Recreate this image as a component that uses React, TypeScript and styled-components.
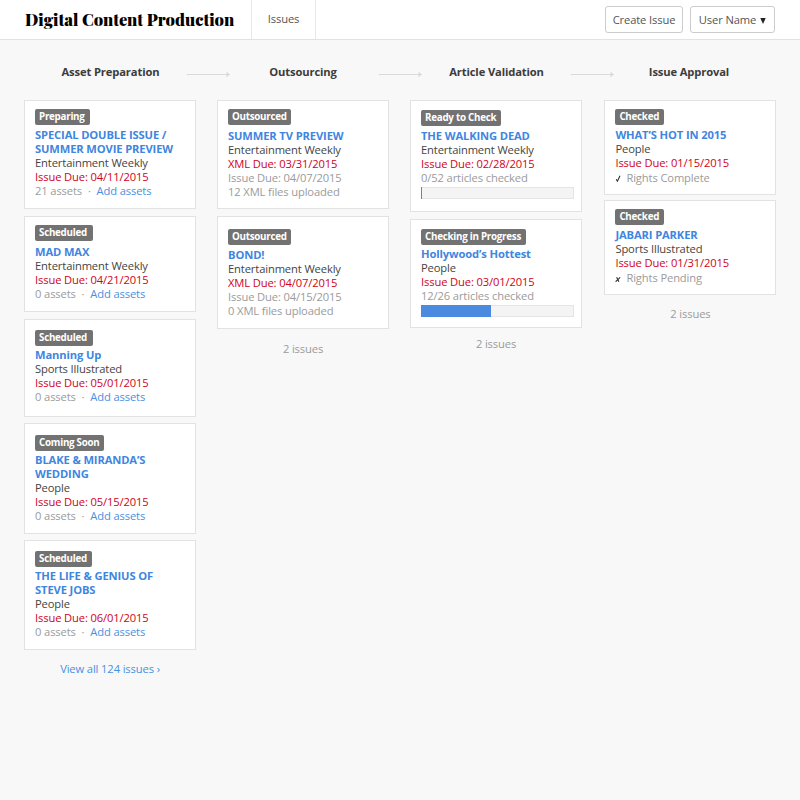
import React from 'react';
import styled, { createGlobalStyle } from 'styled-components';

const GlobalStyle = createGlobalStyle`
  * { box-sizing: border-box; }
  body {
    margin: 0;
    background: #f8f8f8;
    color: #444;
    font-family: "Open Sans", "Noto Sans", sans-serif;
    font-size: 11.2px;
    letter-spacing: -0.13px;
    line-height: 14px;
  }
`;

const Page = styled.div`
  width: 800px;
  height: 800px;
  overflow: hidden;
  background: #f8f8f8;
`;

const TopBar = styled.header`
  display: flex;
  height: 40px;
  background: #fff;
  border-bottom: 1px solid #e2e2e2;
`;

const Brand = styled.h1`
  width: 251px;
  margin: 0;
  padding: 8px 0 0 25px;
  font: 900 16.4px/22px "Playfair Display", "Abril Fatface", "Liberation Serif", serif;
  letter-spacing: 0;
  color: #000;
  white-space: nowrap;
`;

const NavLink = styled.a`
  width: 65px;
  padding-top: 12px;
  border: solid #e8e8e8;
  border-width: 0 1px;
  text-align: center;
  color: #555;
`;

const Actions = styled.div`
  display: flex;
  gap: 7px;
  margin: 6px 25px 0 auto;
`;

const Button = styled.button<{ $width: number }>`
  display: flex;
  align-items: center;
  justify-content: center;
  gap: 4px;
  width: ${p => p.$width}px;
  height: 27px;
  padding: 0;
  border: 1px solid #ccc;
  border-radius: 3px;
  background: #fff;
  font: inherit;
  letter-spacing: inherit;
  color: #555;
  white-space: nowrap;
`;

const Caret = styled.svg`
  width: 6px;
  height: 6px;
  margin-top: 2px;
  fill: #222;
`;

const Steps = styled.div`
  display: flex;
  align-items: center;
  height: 14px;
  margin: 25px 0 0 34px;
`;

const StepTitle = styled.h2<{ $width: number; $trim?: number }>`
  width: ${p => p.$width}px;
  margin: 0;
  padding-right: ${p => p.$trim ?? 0}px;
  text-align: center;
  font-size: inherit;
  line-height: 14px;
  font-weight: 700;
  color: #3c3c3c;
  white-space: nowrap;
`;

const StepArrow = styled.svg`
  width: 43px;
  height: 7px;
  margin-top: 4px;
  fill: #dadada;
`;

const Board = styled.main`
  display: grid;
  grid-template-columns: 172px 172px 172px 172px;
  column-gap: 21px;
  align-items: start;
  padding: 21px 0 0 24px;

  & > :last-child { margin-left: 1.4px; margin-right: -1.4px; }
`;

const Column = styled.section`
  display: flex;
  flex-direction: column;
`;

const CardBox = styled.article<{ $height: number; $gap: number; $pad: number }>`
  height: ${p => p.$height}px;
  margin-top: ${p => p.$gap}px;
  padding: ${p => p.$pad}px 7px 0 10px;
  border: 1px solid #e2e2e2;
  background: #fff;
  white-space: nowrap;
`;

const Badge = styled.div<{ $width: number }>`
  width: ${p => p.$width}px;
  height: 16px;
  padding-left: 4px;
  border-radius: 2px;
  background: #727272;
  color: #fff;
  font-size: 9.8px;
  letter-spacing: -0.26px;
  line-height: 15px;
  font-weight: 700;
`;

const Title = styled.h3<{ $gap: number }>`
  margin: ${p => p.$gap}px 0 0;
  font-size: inherit;
  line-height: 14px;
  font-weight: 700;
  color: #3f86e0;
  white-space: pre-line;
`;

const Line = styled.div<{ $tone?: 'due' | 'muted' }>`
  color: ${p => (p.$tone === 'due' ? '#d0021b' : p.$tone === 'muted' ? '#9b9b9b' : '#444')};
`;

const AddLink = styled.a`
  color: #4a90e2;
`;

const Dot = styled.span`
  display: inline-block;
  width: 14.5px;
  text-align: center;
`;

const Rights = styled(Line)`
  display: flex;
  align-items: center;
  height: 16px;
  gap: 4px;
`;

const Mark = styled.svg`
  width: 7px;
  height: 7px;
  margin-top: 1px;
  fill: none;
  stroke: #333;
`;

const Track = styled.div<{ $gap: number }>`
  width: 153px;
  height: 12px;
  margin-top: ${p => p.$gap}px;
  border: 1px solid #e4e4e4;
  background: #f4f4f4;
`;

const Fill = styled.div`
  height: 12px;
  margin: -1px 0 0 -1px;
  background: #4a8be0;
`;

const Footer = styled.div<{ $gap: number; $link?: boolean }>`
  margin-top: ${p => p.$gap}px;
  text-align: center;
  color: ${p => (p.$link ? '#4a90e2' : '#9b9b9b')};
`;

interface Issue {
  badge: string;
  badgeWidth: number;
  title: string;
  brand: string;
  due: string;
  height: number;
  gap?: number;
  pad: number;
  titleGap: number;
  xml?: { due: string; files: number };
  assets?: number;
  rights?: 'Complete' | 'Pending';
  progress?: { label: string; fill: number; gap: number };
}

interface Stage {
  issues: Issue[];
  footer: string;
  footerGap: number;
  link?: boolean;
}

const EW = 'Entertainment Weekly';

const stages: Stage[] = [
  {
    footer: 'View all 124 issues ›', footerGap: 12, link: true,
    issues: [
      { badge: 'Preparing', badgeWidth: 55, title: 'SPECIAL DOUBLE ISSUE /\nSUMMER MOVIE PREVIEW', brand: EW, due: '04/11/2015', assets: 21, height: 109, pad: 8, titleGap: 3 },
      { badge: 'Scheduled', badgeWidth: 58, title: 'MAD MAX', brand: EW, due: '04/21/2015', assets: 0, height: 96, gap: 7, pad: 8, titleGap: 4 },
      { badge: 'Scheduled', badgeWidth: 58, title: 'Manning Up', brand: 'Sports Illustrated', due: '05/01/2015', assets: 0, height: 98, gap: 7, pad: 10, titleGap: 2 },
      { badge: 'Coming Soon', badgeWidth: 69, title: 'BLAKE & MIRANDA’S\nWEDDING', brand: 'People', due: '05/15/2015', assets: 0, height: 111, gap: 6, pad: 11, titleGap: 2 },
      { badge: 'Scheduled', badgeWidth: 57, title: 'THE LIFE & GENIUS OF\nSTEVE JOBS', brand: 'People', due: '06/01/2015', assets: 0, height: 110, gap: 6, pad: 10, titleGap: 2 },
    ],
  },
  {
    footer: '2 issues', footerGap: 13,
    issues: [
      { badge: 'Outsourced', badgeWidth: 63, title: 'SUMMER TV PREVIEW', brand: EW, due: '04/07/2015', xml: { due: '03/31/2015', files: 12 }, height: 109, pad: 8, titleGap: 4 },
      { badge: 'Outsourced', badgeWidth: 63, title: 'BOND!', brand: EW, due: '04/15/2015', xml: { due: '04/07/2015', files: 0 }, height: 113, gap: 7, pad: 12, titleGap: 3 },
    ],
  },
  {
    footer: '2 issues', footerGap: 9,
    issues: [
      { badge: 'Ready to Check', badgeWidth: 80, title: 'THE WALKING DEAD', brand: EW, due: '02/28/2015', progress: { label: '0/52', fill: 1, gap: 2 }, height: 112, pad: 9, titleGap: 3 },
      { badge: 'Checking in Progress', badgeWidth: 105, title: 'Hollywood’s Hottest', brand: 'People', due: '03/01/2015', progress: { label: '12/26', fill: 70, gap: 2 }, height: 109, gap: 7, pad: 9, titleGap: 2 },
    ],
  },
  {
    footer: '2 issues', footerGap: 12,
    issues: [
      { badge: 'Checked', badgeWidth: 49, title: 'WHAT’S HOT IN 2015', brand: 'People', due: '01/15/2015', rights: 'Complete', height: 95, pad: 8, titleGap: 3 },
      { badge: 'Checked', badgeWidth: 49, title: 'JABARI PARKER', brand: 'Sports Illustrated', due: '01/31/2015', rights: 'Pending', height: 95, gap: 5, pad: 8, titleGap: 3 },
    ],
  },
];

function IssueCard({ issue }: { issue: Issue }) {
  const { xml, assets, rights, progress } = issue;
  return (
    <CardBox $height={issue.height} $gap={issue.gap ?? 0} $pad={issue.pad}>
      <Badge $width={issue.badgeWidth}>{issue.badge}</Badge>
      <Title $gap={issue.titleGap}>{issue.title}</Title>
      <Line>{issue.brand}</Line>
      {xml && <Line $tone="due">XML Due: {xml.due}</Line>}
      <Line $tone={xml ? 'muted' : 'due'}>Issue Due: {issue.due}</Line>
      {xml && <Line $tone="muted">{xml.files} XML files uploaded</Line>}
      {assets !== undefined && (
        <Line $tone="muted">{assets} assets<Dot>·</Dot><AddLink>Add assets</AddLink></Line>
      )}
      {rights && (
        <Rights $tone="muted">
          <Mark viewBox="0 0 7 7">
            {rights === 'Complete'
              ? <path d="M1.2 4.2 L2.4 6.2 L5 .8" strokeWidth="1.1" />
              : <path d="M1.6 2.2 L3.9 6.8 M5.2 2.4 L.6 6.7" strokeWidth="1.1" />}
          </Mark>
          Rights {rights}
        </Rights>
      )}
      {progress && (
        <>
          <Line $tone="muted">{progress.label} articles checked</Line>
          <Track $gap={progress.gap}><Fill style={{ width: progress.fill }} /></Track>
        </>
      )}
    </CardBox>
  );
}

const Arrow = () => (
  <StepArrow viewBox="0 0 43 7">
    <path d="M0 3h40v1H0z" />
    <path d="M39.5 .8L43 3.5L39.5 6.2z" />
  </StepArrow>
);

export default function App() {
  return (
    <Page>
      <GlobalStyle />
      <TopBar>
        <Brand>Digital Content Production</Brand>
        <NavLink>Issues</NavLink>
        <Actions>
          <Button $width={78}>Create Issue</Button>
          <Button $width={85}>User Name <Caret viewBox="0 0 6 6"><path d="M.3 0h5.4L3 6z" /></Caret></Button>
        </Actions>
      </TopBar>
      <Steps>
        <StepTitle $width={153}>Asset Preparation</StepTitle>
        <Arrow />
        <StepTitle $width={149} $trim={3}>Outsourcing</StepTitle>
        <Arrow />
        <StepTitle $width={149}>Article Validation</StepTitle>
        <Arrow />
        <StepTitle $width={150}>Issue Approval</StepTitle>
      </Steps>
      <Board>
        {stages.map((stage, i) => (
          <Column key={i}>
            {stage.issues.map(issue => <IssueCard key={issue.title} issue={issue} />)}
            <Footer $gap={stage.footerGap} $link={stage.link}>{stage.footer}</Footer>
          </Column>
        ))}
      </Board>
    </Page>
  );
}
